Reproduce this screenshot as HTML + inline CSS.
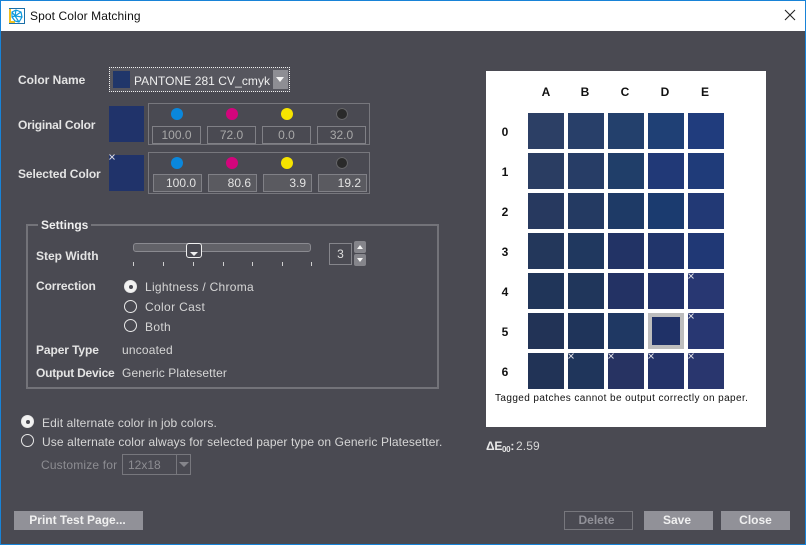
<!DOCTYPE html>
<html><head><meta charset="utf-8"><title>Spot Color Matching</title>
<style>
html,body{margin:0;padding:0;width:806px;height:545px;overflow:hidden;background:#4a4a52}
body{position:relative;font:12px "Liberation Sans",sans-serif;color:#d8d8d8}
div{position:absolute;box-sizing:border-box}
.t{white-space:nowrap;line-height:14px;height:14px}
.b{font-weight:bold;color:#e4e4e4}
.r{letter-spacing:.12px;color:#d6d6d6}
.box{border:1px solid #77777d}
.f{height:18px;border:1px solid #808086;color:#a8a8a8;font-size:12px;line-height:16px;text-align:center}
.s{height:18px;border:1px solid #808086;background:#5a5a60;color:#e2e2e2;font-size:12px;line-height:16px;text-align:right;padding-right:5px}
.dot{width:12px;height:12px;border-radius:50%}
.rad{width:13px;height:13px;border-radius:50%;border:1px solid #e8e8e8}
.rad.on{background:#f2f2f2}
.rad.on:after{content:"";position:absolute;left:3.5px;top:3.5px;width:4px;height:4px;border-radius:50%;background:#4a4a52}
.p{width:36px;height:36px}
.hdr{font-weight:bold;color:#111;text-align:center;width:20px;line-height:14px;height:14px}
.tick{width:1px;height:4px;top:262px;background:#d0d0d0}
.btn{height:19px;background:#919198;color:#f0f0f0;font-weight:bold;text-align:center;line-height:18px}
</style></head><body>
<div style="left:0;top:0;width:806px;height:545px;border:1px solid #1883d7;z-index:9;pointer-events:none"></div>
<div style="left:0;top:0;width:806px;height:31px;background:#fff"></div>
<svg style="position:absolute;left:9px;top:8px" width="16" height="16" viewBox="0 0 16 16"><rect x=".5" y=".5" width="15" height="15" fill="#fff" stroke="#1a6fa8"/><path d="M1 1v13h5" fill="none" stroke="#f0c020" stroke-width="2"/><path d="M3 4l4-2 5 2 1 5-3 5-4-1-3-4zM7 2l-1 6 4 6M3 4l3 4 7 1M12 4l-6 4-3 1" fill="none" stroke="#0f9bdc" stroke-width="1.2"/></svg>
<div class="t" style="left:30px;top:9px;color:#111;font-size:12px;letter-spacing:.1px">Spot Color Matching</div>
<svg style="position:absolute;left:784px;top:9px" width="12" height="12" viewBox="0 0 12 12"><path d="M1 1l10 10M11 1L1 11" stroke="#222" stroke-width="1.1" fill="none"/></svg>

<div class="t b" style="left:18px;top:73px">Color Name</div>
<div class="t b" style="left:18px;top:118px;letter-spacing:-.2px">Original Color</div>
<div class="t b" style="left:18px;top:167px;letter-spacing:-.1px">Selected Color</div>

<div style="left:109px;top:67px;width:181px;height:25px;border:1px dotted #f0f0f0;background:#56565e"></div>
<div style="left:113px;top:71px;width:17px;height:17px;background:#20366a"></div>
<div class="t" style="left:134px;top:74px;color:#efefef;letter-spacing:.06px">PANTONE 281 CV_cmyk</div>
<div style="left:273px;top:70px;width:15px;height:19px;background:#8e8e94"></div>
<div style="left:276px;top:77px;width:0;height:0;border-left:4.5px solid transparent;border-right:4.5px solid transparent;border-top:5px solid #f4f4f4"></div>

<div style="left:109px;top:106px;width:35px;height:36px;background:#20336a"></div>
<div class="box" style="left:148px;top:103px;width:222px;height:42px"></div>
<div class="dot" style="left:171px;top:108px;background:#0a87dc"></div>
<div class="dot" style="left:226px;top:108px;background:#d3057c"></div>
<div class="dot" style="left:281px;top:108px;background:#f6e400"></div>
<div class="dot" style="left:336px;top:108px;background:#2a2a2a;box-shadow:inset 0 0 0 1px #66666a"></div>
<div class="f" style="left:152px;top:126px;width:49px">100.0</div>
<div class="f" style="left:207px;top:126px;width:49px">72.0</div>
<div class="f" style="left:262px;top:126px;width:49px">0.0</div>
<div class="f" style="left:317px;top:126px;width:49px">32.0</div>

<div style="left:109px;top:155px;width:35px;height:36px;background:#20336a"></div>
<svg style="position:absolute;left:109px;top:154px" width="7" height="7"><path d="M.5.5l5 5M5.5.5l-5 5" stroke="#d8d8e0" fill="none"/></svg>
<div class="box" style="left:148px;top:152px;width:222px;height:42px"></div>
<div class="dot" style="left:171px;top:157px;background:#0a87dc"></div>
<div class="dot" style="left:226px;top:157px;background:#d3057c"></div>
<div class="dot" style="left:281px;top:157px;background:#f6e400"></div>
<div class="dot" style="left:336px;top:157px;background:#2a2a2a;box-shadow:inset 0 0 0 1px #66666a"></div>
<div class="s" style="left:153px;top:174px;width:49px">100.0</div>
<div class="s" style="left:208px;top:174px;width:49px">80.6</div>
<div class="s" style="left:263px;top:174px;width:49px">3.9</div>
<div class="s" style="left:318px;top:174px;width:49px">19.2</div>

<div style="left:26px;top:224px;width:413px;height:165px;border:2px solid #737379"></div>
<div class="t b" style="left:38px;top:218px;padding:0 3px;background:#4a4a52;color:#f0f0f0">Settings</div>
<div class="t b" style="left:36px;top:249px">Step Width</div>
<div style="left:133px;top:243px;width:178px;height:9px;border:1px solid #8a8a90;border-radius:3px;background:#626268"></div>
<div style="left:186px;top:243px;width:16px;height:15px;border:1px solid #f0f0f0;border-radius:3px;background:#4a4a52"></div>
<div style="left:190px;top:252px;width:0;height:0;border-left:4px solid transparent;border-right:4px solid transparent;border-top:4px solid #f0f0f0"></div>
<div class="tick" style="left:133px"></div><div class="tick" style="left:163px"></div><div class="tick" style="left:193px"></div><div class="tick" style="left:223px"></div><div class="tick" style="left:252px"></div><div class="tick" style="left:282px"></div><div class="tick" style="left:311px"></div>
<div class="box" style="left:329px;top:243px;width:23px;height:22px;border-color:#85858b;color:#ddd;text-align:center;line-height:20px">3</div>
<div style="left:354px;top:241px;width:12px;height:12px;background:#85858b;border-radius:2px"></div>
<div style="left:357px;top:245px;width:0;height:0;border-left:3.5px solid transparent;border-right:3.5px solid transparent;border-bottom:4px solid #f4f4f4"></div>
<div style="left:354px;top:254px;width:12px;height:12px;background:#85858b;border-radius:2px"></div>
<div style="left:357px;top:258px;width:0;height:0;border-left:3.5px solid transparent;border-right:3.5px solid transparent;border-top:4px solid #f4f4f4"></div>

<div class="t b" style="left:36px;top:279px;letter-spacing:-.1px">Correction</div>
<div class="rad on" style="left:124px;top:280px"></div>
<div class="t r" style="left:145px;top:280px;letter-spacing:.27px">Lightness / Chroma</div>
<div class="rad" style="left:124px;top:300px"></div>
<div class="t r" style="left:145px;top:300px;letter-spacing:.35px">Color Cast</div>
<div class="rad" style="left:124px;top:319px"></div>
<div class="t r" style="left:145px;top:320px;letter-spacing:.35px">Both</div>
<div class="t b" style="left:36px;top:343px;letter-spacing:-.1px">Paper Type</div>
<div class="t r" style="left:122px;top:343px;letter-spacing:.18px">uncoated</div>
<div class="t b" style="left:36px;top:366px;letter-spacing:-.22px">Output Device</div>
<div class="t r" style="left:122px;top:366px">Generic Platesetter</div>

<div class="rad on" style="left:21px;top:415px"></div>
<div class="t r" style="left:42px;top:416px">Edit alternate color in job colors.</div>
<div class="rad" style="left:21px;top:434px"></div>
<div class="t r" style="left:42px;top:435px">Use alternate color always for selected paper type on Generic Platesetter.</div>
<div class="t r" style="left:41px;top:458px;color:#8d8d92;letter-spacing:.17px">Customize for</div>
<div style="left:122px;top:454px;width:69px;height:21px;border:1px solid #77777d"></div>
<div style="left:176px;top:454px;width:1px;height:21px;background:#77777d"></div>
<div class="t" style="left:128px;top:458px;color:#8d8d92">12x18</div>
<div style="left:179px;top:462px;width:0;height:0;border-left:5px solid transparent;border-right:5px solid transparent;border-top:5px solid #85858b"></div>

<div class="btn" style="left:14px;top:511px;width:129px;padding-right:2px">Print Test Page...</div>
<div class="btn" style="left:564px;top:511px;width:69px;background:none;border:1px solid #77777d;color:#919198;line-height:17px;padding-right:4px">Delete</div>
<div class="btn" style="left:644px;top:511px;width:69px;padding-right:3px">Save</div>
<div class="btn" style="left:721px;top:511px;width:69px">Close</div>

<div style="left:486px;top:71px;width:280px;height:356px;background:#fff"></div>
<div class="hdr" style="left:536px;top:85px">A</div><div class="hdr" style="left:575px;top:85px">B</div><div class="hdr" style="left:615px;top:85px">C</div><div class="hdr" style="left:655px;top:85px">D</div><div class="hdr" style="left:695px;top:85px">E</div>
<div class="hdr" style="left:495px;top:125px">0</div><div class="hdr" style="left:495px;top:165px">1</div><div class="hdr" style="left:495px;top:205px">2</div><div class="hdr" style="left:495px;top:245px">3</div><div class="hdr" style="left:495px;top:285px">4</div><div class="hdr" style="left:495px;top:325px">5</div><div class="hdr" style="left:495px;top:365px">6</div>

<div class="p" style="left:528px;top:113px;background:#2c3f65"></div><div class="p" style="left:568px;top:113px;background:#283f69"></div><div class="p" style="left:608px;top:113px;background:#23406c"></div><div class="p" style="left:648px;top:113px;background:#1f4075"></div><div class="p" style="left:688px;top:113px;background:#203c7d"></div>
<div class="p" style="left:528px;top:153px;background:#2a3d62"></div><div class="p" style="left:568px;top:153px;background:#273d66"></div><div class="p" style="left:608px;top:153px;background:#203e69"></div><div class="p" style="left:648px;top:153px;background:#213977"></div><div class="p" style="left:688px;top:153px;background:#1f3b79"></div>
<div class="p" style="left:528px;top:193px;background:#27395f"></div><div class="p" style="left:568px;top:193px;background:#243a62"></div><div class="p" style="left:608px;top:193px;background:#1e3a66"></div><div class="p" style="left:648px;top:193px;background:#1b3b6f"></div><div class="p" style="left:688px;top:193px;background:#223975"></div>
<div class="p" style="left:528px;top:233px;background:#23375b"></div><div class="p" style="left:568px;top:233px;background:#20385f"></div><div class="p" style="left:608px;top:233px;background:#223365"></div><div class="p" style="left:648px;top:233px;background:#21356b"></div><div class="p" style="left:688px;top:233px;background:#203875"></div>
<div class="p" style="left:528px;top:273px;background:#203559"></div><div class="p" style="left:568px;top:273px;background:#20365b"></div><div class="p" style="left:608px;top:273px;background:#233264"></div><div class="p" style="left:648px;top:273px;background:#23336a"></div><div class="p" style="left:688px;top:273px;background:#283772"></div>
<div class="p" style="left:528px;top:313px;background:#223356"></div><div class="p" style="left:568px;top:313px;background:#1f345a"></div><div class="p" style="left:608px;top:313px;background:#1f3863"></div><div class="p" style="left:648px;top:313px;background:#1f3167;border:4px solid #bdbdbd"></div><div class="p" style="left:688px;top:313px;background:#283772"></div>
<div class="p" style="left:528px;top:353px;background:#213356"></div><div class="p" style="left:568px;top:353px;background:#1f355b"></div><div class="p" style="left:608px;top:353px;background:#273362"></div><div class="p" style="left:648px;top:353px;background:#243369"></div><div class="p" style="left:688px;top:353px;background:#29366e"></div>

<svg style="position:absolute;left:688px;top:273px" width="7" height="7"><path d="M.5.5l5 5M5.5.5l-5 5" stroke="#d8d8e0" fill="none"/></svg>
<svg style="position:absolute;left:688px;top:313px" width="7" height="7"><path d="M.5.5l5 5M5.5.5l-5 5" stroke="#d8d8e0" fill="none"/></svg>
<svg style="position:absolute;left:568px;top:353px" width="7" height="7"><path d="M.5.5l5 5M5.5.5l-5 5" stroke="#d8d8e0" fill="none"/></svg>
<svg style="position:absolute;left:608px;top:353px" width="7" height="7"><path d="M.5.5l5 5M5.5.5l-5 5" stroke="#d8d8e0" fill="none"/></svg>
<svg style="position:absolute;left:648px;top:353px" width="7" height="7"><path d="M.5.5l5 5M5.5.5l-5 5" stroke="#d8d8e0" fill="none"/></svg>
<svg style="position:absolute;left:688px;top:353px" width="7" height="7"><path d="M.5.5l5 5M5.5.5l-5 5" stroke="#d8d8e0" fill="none"/></svg>

<div class="t" style="left:495px;top:392px;color:#111;font-size:10px;letter-spacing:.4px">Tagged patches cannot be output correctly on paper.</div>
<div class="t b" style="left:486px;top:439px;font-size:12px;color:#e8e8e8;letter-spacing:-.3px">ΔE<span style="font-size:8px;position:relative;top:2px">00</span>:</div>
<div class="t r" style="left:516px;top:439px">2.59</div>
</body></html>
